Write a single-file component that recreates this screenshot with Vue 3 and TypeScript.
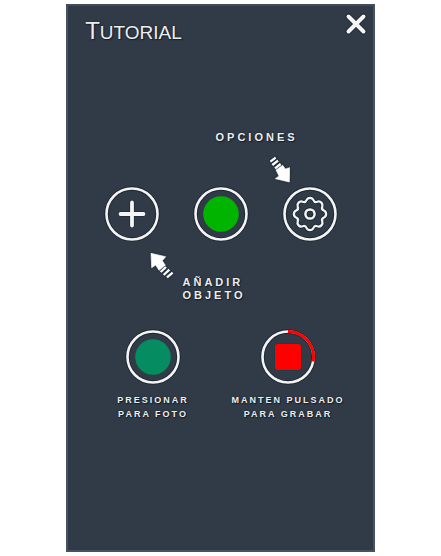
<script setup lang="ts">
import { ref } from 'vue'

const open = ref(true)

const point = (radius: number, degrees: number): string => {
  const a = (degrees * Math.PI) / 180
  return `${(28 + radius * Math.sin(a)).toFixed(2)} ${(28 - radius * Math.cos(a)).toFixed(2)}`
}

// Eight rounded teeth joined by shallow concave notches.
const gear = (): string => {
  let d = `M${point(14.3, -14)}`
  for (let k = 0; k < 8; k++) {
    d += `A3.8 3.8 0 0 1 ${point(14.3, k * 45 + 14)}A3 3 0 0 0 ${point(14.3, k * 45 + 31)}`
  }
  return d + 'Z'
}
</script>

<template>
  <div class="screen">
    <main v-if="open" class="panel">
      <header class="header">
        <h1 class="title">Tutorial</h1>
        <button class="close" type="button" aria-label="Cerrar" @click="open = false">
          <svg class="icon" viewBox="0 0 24 24" width="24" height="24">
            <path class="outline" d="M4.5 4.5 19.5 19.5M19.5 4.5 4.5 19.5" stroke-width="6" />
            <path d="M4.5 4.5 19.5 19.5M19.5 4.5 4.5 19.5" stroke-width="4" />
          </svg>
        </button>
      </header>

      <section class="controls">
        <div class="hint-options">
          <p class="label">Opciones</p>
          <svg class="arrow" viewBox="192 108 66 84" width="22" height="28">
            <path d="M193 125 209 113M199 135 216 122M207 145 224 132" stroke-width="7" />
            <path class="solid" d="M210 150 230 136 238 147 251 143 250 186 208 176 219 168Z" />
          </svg>
        </div>

        <div class="buttons">
          <button class="round" type="button" aria-label="Añadir objeto">
            <svg class="icon" viewBox="0 0 56 56" width="56" height="56">
              <circle class="outline" cx="28" cy="28" r="25.5" stroke-width="4.5" />
              <circle cx="28" cy="28" r="25.5" stroke-width="2.6" />
              <path class="outline" d="M28 16.5V39.5M16.5 28H39.5" stroke-width="5" />
              <path d="M28 16.5V39.5M16.5 28H39.5" stroke-width="3.8" />
            </svg>
          </button>
          <button class="round" type="button" aria-label="Capturar">
            <svg class="icon" viewBox="0 0 56 56" width="56" height="56">
              <circle class="outline" cx="28" cy="28" r="25.5" stroke-width="4.5" />
              <circle cx="28" cy="28" r="25.5" stroke-width="2.6" />
              <circle class="green" cx="28" cy="28" r="17.8" />
            </svg>
          </button>
          <button class="round" type="button" aria-label="Opciones">
            <svg class="icon" viewBox="0 0 56 56" width="56" height="56">
              <circle class="outline" cx="28" cy="28" r="25.5" stroke-width="4.5" />
              <circle cx="28" cy="28" r="25.5" stroke-width="2.6" />
              <path class="outline" :d="gear()" stroke-width="4" />
              <path :d="gear()" stroke-width="2.3" />
              <circle class="outline" cx="28" cy="28" r="4.6" stroke-width="4.2" />
              <circle cx="28" cy="28" r="4.6" stroke-width="2.5" />
            </svg>
          </button>
        </div>

        <div class="hint-add">
          <svg class="arrow" viewBox="144 33 78 84" width="26" height="28">
            <path d="M179 96 195 81M188 105 205 89M198 112 215 98" stroke-width="7" />
            <path class="solid" d="M150 40 194 50 184 62 193 76 174 91 164 75 152 83Z" />
          </svg>
          <p class="label">Añadir<br />objeto</p>
        </div>
      </section>

      <section class="modes">
        <figure class="mode">
          <svg class="icon" viewBox="0 0 56 56" width="56" height="56" aria-hidden="true">
            <circle class="outline" cx="28" cy="28" r="25.5" stroke-width="4.5" />
            <circle cx="28" cy="28" r="25.5" stroke-width="2.6" />
            <circle class="teal" cx="28" cy="28" r="17.8" />
          </svg>
          <figcaption class="caption">Presionar<br />para foto</figcaption>
        </figure>
        <figure class="mode">
          <svg class="icon" viewBox="0 0 56 56" width="56" height="56" aria-hidden="true">
            <circle class="outline" cx="28" cy="28" r="25.5" stroke-width="4.5" />
            <circle cx="28" cy="28" r="25.5" stroke-width="2.6" />
            <path class="progress" d="M28 2.5A25.5 25.5 0 0 1 53.1 32.5" stroke-width="3" />
            <rect class="stop" x="14.5" y="14.5" width="27" height="27" rx="3" />
          </svg>
          <figcaption class="caption">Manten pulsado<br />para grabar</figcaption>
        </figure>
      </section>
    </main>
  </div>
</template>

<style>
body {
  margin: 0;
  background: #fff;
}
</style>

<style scoped>
.screen {
  box-sizing: border-box;
  min-height: 100vh;
  padding: 4px 15%;
  display: flex;
  font-family: "Liberation Sans", Arial, sans-serif;
}

.panel {
  box-sizing: border-box;
  flex: 1;
  background: #303b47;
  border: 2px solid #465461;
  border-top-color: #3e4d59;
  color: #ededed;
  text-shadow: 0 0 2px #17202b, 1px 1px 1px #17202b;
}

.header {
  display: flex;
  justify-content: space-between;
  align-items: flex-start;
  padding: 6px 5px 0 17px;
}

.title {
  margin: 6px 0 0;
  font-size: 19px;
  font-weight: 400;
  line-height: 26px;
  text-transform: uppercase;
}

.title::first-letter {
  font-size: 24px;
}

button {
  display: block;
  padding: 0;
  border: 0;
  background: none;
  cursor: pointer;
}

svg {
  display: block;
}

.icon,
.arrow {
  fill: none;
  stroke: #f4f4f4;
  stroke-linecap: round;
  stroke-linejoin: round;
}

.arrow {
  stroke: #fff;
  stroke-linecap: butt;
  filter: drop-shadow(0 0 1px #17202b);
}

.icon .outline {
  stroke: #1c2733;
}

.solid {
  fill: #fff;
  stroke-width: 2;
}

.icon .green {
  fill: #00b400;
  stroke: none;
}

.icon .teal {
  fill: #058c60;
  stroke: none;
}

.icon .progress {
  stroke: #f00;
  stroke-linecap: butt;
}

.icon .stop {
  fill: #f00;
  stroke: #17404a;
  stroke-width: 1;
}

.controls {
  width: 234px;
  margin: 85px auto 0;
}

.label,
.caption {
  margin: 0;
  font-weight: 700;
  text-transform: uppercase;
}

.label {
  font-size: 11px;
  line-height: 13px;
  letter-spacing: 3px;
}

.hint-options {
  display: flex;
  flex-direction: column;
  gap: 12px;
  padding-left: 112px;
}

.hint-options .arrow {
  margin-left: 54px;
}

.buttons {
  display: flex;
  justify-content: space-between;
  margin-top: 2px;
}

.hint-add {
  display: flex;
  align-items: flex-start;
  gap: 8px;
  margin-top: 9px;
  padding-left: 45px;
}

.hint-add .label {
  margin-top: 25px;
}

.modes {
  display: grid;
  grid-template-columns: 135px 135px;
  justify-content: center;
  margin-top: 27px;
}

.mode {
  display: flex;
  flex-direction: column;
  align-items: center;
  gap: 8px;
  margin: 0;
}

.caption {
  font-size: 9px;
  line-height: 14px;
  letter-spacing: 2px;
  text-align: center;
  white-space: nowrap;
}
</style>
